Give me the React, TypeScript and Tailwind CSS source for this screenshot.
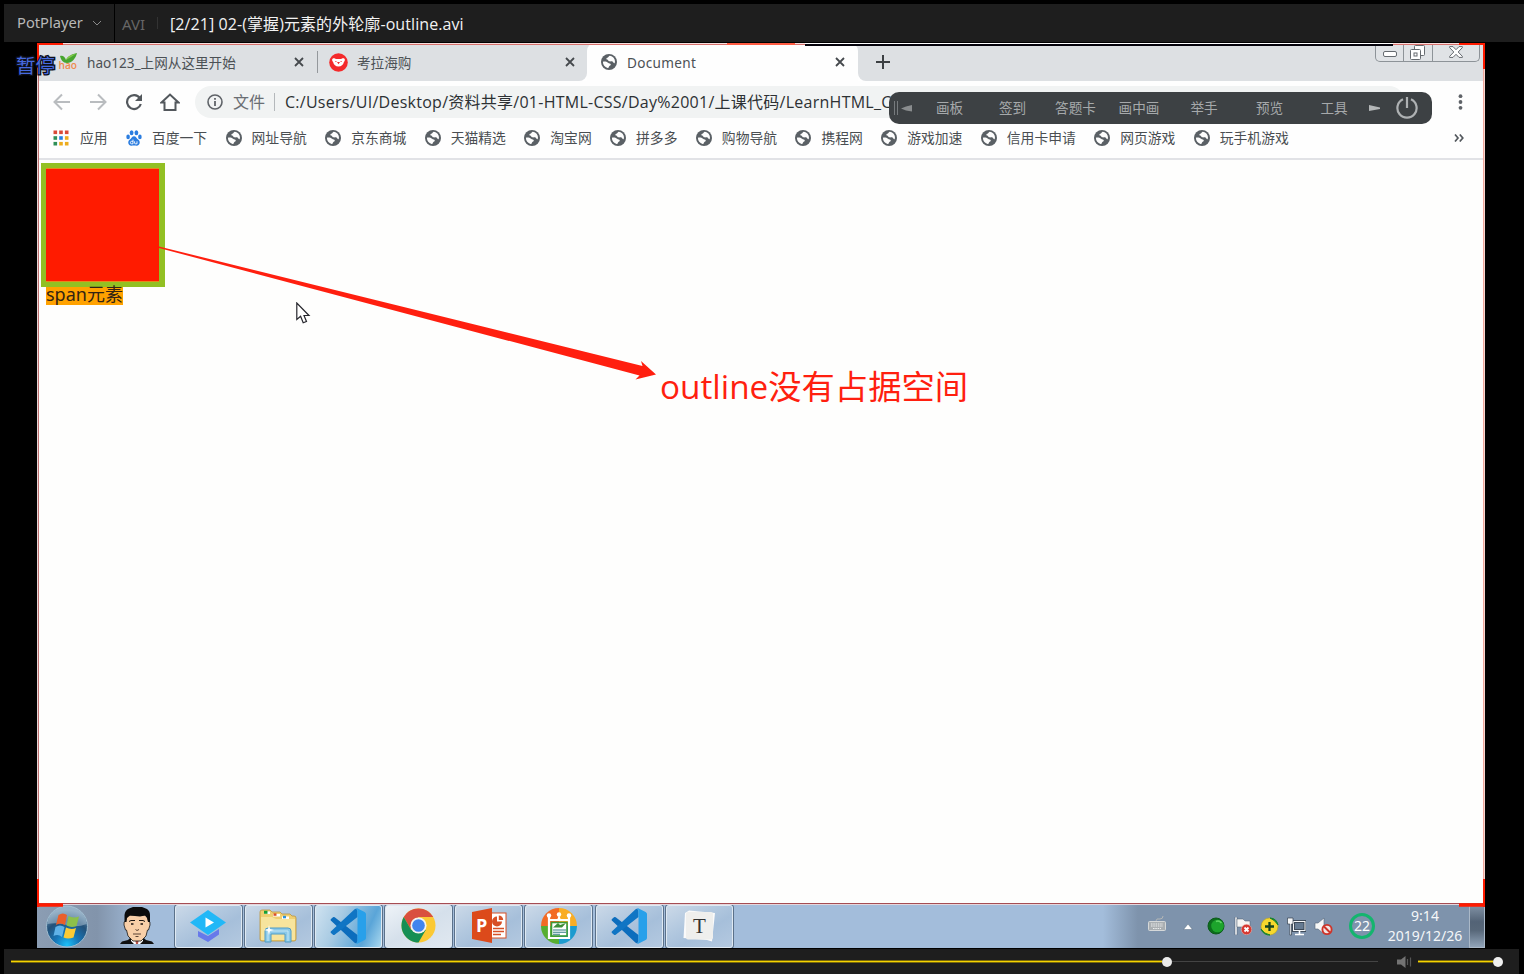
import React from "react";

const ui = "font-['Noto_Sans','Noto_Sans_CJK_SC',sans-serif]";
const uiLight = "font-['Open_Sans','Noto_Sans_CJK_SC',sans-serif]";

function Globe() {
  return (
    <svg className="h-4 w-4 shrink-0" viewBox="0 0 16 16">
      <circle cx="8" cy="8" r="8" fill="#5a6065" />
      <path d="M8.6 1.8 C10.4 1.8 12.6 3.2 13.6 5.4 C14.2 7.2 14 8.4 13.6 9.2 C12.8 9.4 12.4 8.4 11.8 7.8 C10.8 7 9.6 7.6 8.3 7.3 C6.9 7 7.4 5.6 6 5.5 C5 5.3 5.2 3.9 6.4 3.7 C7.8 3.4 7.4 2.2 8.6 1.8 Z" fill="#fdfdfd" />
      <path d="M1.9 7.8 C3.6 7.4 5.8 7.6 7 8.8 C8 9.7 9.6 9.4 9.8 10.5 C9.8 11.7 8.4 11.6 8 12.4 C7.8 13.2 7.6 13.9 6.6 13.9 C3.8 13.3 1.9 10.8 1.9 7.8 Z" fill="#fdfdfd" />
    </svg>
  );
}

function Close() {
  return (
    <svg className="h-[10px] w-[10px] shrink-0" viewBox="0 0 10 10">
      <path d="M1 1 L9 9 M9 1 L1 9" stroke="#45494d" strokeWidth="1.8" />
    </svg>
  );
}

function Hao() {
  return (
    <svg className="h-[18px] w-[20px] shrink-0 overflow-visible" viewBox="0 0 20 18">
      <path d="M2 3 C5 2 7 4 8 7 C10 3 14 1 19 0 C18 5 14 10 9 10 C5 10 3 7 2 3 Z" fill="#47a52f" />
      <path d="M8 7 C11 5 15 3 19 0 C15 2 10 2 8 7 Z" fill="#83c94b" />
      <text x="0.5" y="16.4" fontSize="11" fontWeight="600" fontFamily="Open Sans" fill="#ee8c4c" textLength="18.5" lengthAdjust="spacingAndGlyphs">hao</text>
    </svg>
  );
}

function Kaola() {
  return (
    <svg className="h-[19px] w-[19px] shrink-0" viewBox="0 0 19 19">
      <circle cx="9.5" cy="9.5" r="9.3" fill="#f42a2b" />
      <path d="M3.8 5.6 C5.3 4.8 6.2 6 7 5.9 H12 C12.8 6 13.7 4.8 15.2 5.6 C16.4 6.3 15.8 8.4 14.9 9 C14.2 12 12.4 13.4 9.5 13.4 C6.6 13.4 4.8 12 4.1 9 C3.2 8.4 2.6 6.3 3.8 5.6 Z" fill="#fff" />
      <path d="M8 9 H11 L9.5 11.2 Z M6.4 8 h1 v1 h-1 Z M11.6 8 h1 v1 h-1 Z" fill="#f42a2b" />
    </svg>
  );
}

function Apps() {
  const rows = [
    ["#d94a37", "#d94a37", "#d94a37"],
    ["#2f8f57", "#2680e3", "#edac1d"],
    ["#2f8f57", "#edac1d", "#edac1d"],
  ];
  return (
    <svg className="h-4 w-4 shrink-0" viewBox="0 0 16 16">
      {rows.map((r, y) => r.map((c, x) => <rect key={`${x}-${y}`} x={0.5 + x * 5.7} y={0.5 + y * 5.7} width="3.6" height="3.6" fill={c} />))}
    </svg>
  );
}

function Baidu() {
  return (
    <svg className="h-4 w-4 shrink-0" viewBox="0 0 16 16" fill="#2b7de0">
      <ellipse cx="5.6" cy="2.7" rx="1.9" ry="2.5" />
      <ellipse cx="10.4" cy="2.7" rx="1.9" ry="2.5" />
      <ellipse cx="2.1" cy="6.9" rx="1.8" ry="2.3" />
      <ellipse cx="13.9" cy="6.9" rx="1.8" ry="2.3" />
      <path d="M8 6.2 C10 6.2 10.5 8.4 12.4 9.8 C15 12 13.5 16 10.5 15.7 C9 15.5 7 15.5 5.5 15.7 C2.5 16 1 12 3.6 9.8 C5.5 8.4 6 6.2 8 6.2 Z" />
      <path d="M7 9.6 V13.8 H5.4 Q4.3 13.7 4.4 12.6 Q4.4 11.4 5.5 11.3 H7 M8.6 11.3 V13 Q8.6 13.8 9.4 13.8 H11 V11.3" fill="none" stroke="#fff" strokeWidth=".9" />
    </svg>
  );
}

function VSCode() {
  return (
    <svg className="h-9 w-9" viewBox="0 0 36 36">
      <path d="M.8 12.4 Q.2 11.6 1 10.9 L3 9.2 Q3.8 8.6 4.7 9.3 L27.5 27 V33 Q27.3 35 25.6 35.3 L24.6 34.8 Z" fill="#0c6dbd" />
      <path d="M.8 23.6 Q.2 24.4 1 25.1 L3 26.8 Q3.8 27.4 4.7 26.7 L27.5 9 V3 Q27.3 1 25.6 .7 L24.6 1.2 Z" fill="#1075c4" />
      <path d="M25.6 .3 Q26.4 0 27.2 .3 L34.6 3.9 Q36 4.6 36 6 V30 Q36 31.4 34.6 32.1 L27.2 35.7 Q26.4 36 25.6 35.7 Q27.5 35 27.5 33 V3 Q27.5 1 25.6 .3 Z" fill="#28a0ea" />
    </svg>
  );
}

function Xueyuan() {
  return (
    <svg className="h-[32px] w-[36px]" viewBox="0 0 36 32">
      <path d="M8 21 L18 26 L29 19 V24.5 L18 32 L8 26.5 Z" fill="#6779ea" />
      <path d="M18 0 L36 12.5 L18 25 L0 12.5 Z" fill="#22b8f7" />
      <path d="M15.5 7.5 L24 12.5 L15.5 17.5 Z" fill="#fff" />
    </svg>
  );
}

function Explorer() {
  return (
    <svg className="h-9 w-10" viewBox="0 0 40 36">
      <path d="M2 4 Q2 2 4 2 H12 L14 4 H22 L24 6 H32 L34 8 H36 Q38 8 38 10 V31 Q38 33 36 33 H4 Q2 33 2 31 Z" fill="#efcf72" stroke="#bd963d" strokeWidth=".8" />
      <path d="M6 3.5 H12 V6 H6 Z M15 6 H22 V8.5 H15 Z M24 8.5 H31 V11 H24 Z" fill="#fff" />
      <path d="M6 2.8 H9.5 V5.8 H6 Z" fill="#16a034" />
      <path d="M15.5 5.3 H18.5 V7.8 H15.5 Z" fill="#d94f2a" />
      <path d="M25 7.8 H28 V10.3 H25 Z" fill="#2e92d9" />
      <path d="M3 9 H14 L18 11 H37 V32 H3 Z" fill="#f7e49d" />
      <path d="M7 34 V23 Q7 20 10 20 H30 Q33 20 33 23 V34 H27 V26 H13 V34 Z" fill="#8bc9e8" stroke="#4f9cc6" strokeWidth="1" />
      <path d="M10 33 V23 H30 V33" fill="none" stroke="#c3e6f5" strokeWidth="1" />
      <path d="M11 17 L12 21 L16 22 L12 23 L11 27 L10 23 L6 22 L10 21 Z" fill="#fff" />
    </svg>
  );
}

function Chrome() {
  return (
    <svg className="h-[35px] w-[35px]" viewBox="0 0 36 36">
      <circle cx="18" cy="18" r="17.5" fill="#fbc934" />
      <path d="M2.8 9.3 A17.5 17.5 0 0 1 33.2 9.3 H18 L10.4 22.4 Z" fill="#d9503f" />
      <path d="M2.8 9.3 A17.5 17.5 0 0 0 18 35.5 L25.6 22.4 L18 24 L10.4 22.4 Z" fill="#168f55" />
      <circle cx="18" cy="18" r="8.3" fill="#f4f4f0" />
      <circle cx="18" cy="18" r="6.5" fill="#4285ee" />
    </svg>
  );
}

function PowerPoint() {
  return (
    <svg className="h-[35px] w-[36px]" viewBox="0 0 36 35">
      <rect x="18" y="5" width="17" height="25" fill="#fff" stroke="#d75027" strokeWidth="1" />
      <path d="M22 20.5 H33 M22 23.5 H33 M22 26.5 H30" stroke="#d75027" strokeWidth="1.5" />
      <path d="M26 8.5 A5 5 0 1 0 31 13.5 H26 Z" fill="#d75027" />
      <path d="M27.8 7.5 A4.4 4.4 0 0 1 32.2 11.9 H27.8 Z" fill="#d75027" />
      <path d="M1 4 L21 0 V35 L1 31 Z" fill="#dc4a1b" />
      <text x="5" y="24" fontSize="18" fontWeight="700" fontFamily="Open Sans" fill="#fff">P</text>
    </svg>
  );
}

function Capture() {
  return (
    <svg className="h-[38px] w-[38px]" viewBox="0 0 38 38">
      <path d="M19 19 V1 A18 18 0 0 0 1 19 Z" fill="#f26b25" />
      <path d="M19 19 V1 A18 18 0 0 1 37 19 Z" fill="#f9ad25" />
      <path d="M19 19 H1 A18 18 0 0 0 19 37 Z" fill="#57ae31" />
      <path d="M19 19 H37 A18 18 0 0 1 19 37 Z" fill="#1c9bcf" />
      <path d="M9 9 V31 H29 V9 M9 13 H29" fill="none" stroke="#fff" strokeWidth="2.2" />
      <circle cx="9" cy="8.5" r="2.2" fill="#fff" /><circle cx="19" cy="7.5" r="2.2" fill="#fff" /><circle cx="29" cy="8.5" r="2.2" fill="#fff" />
      <path d="M17 13 L19 8 L21 13 Z" fill="#fff" />
      <rect x="11.5" y="15.5" width="15.5" height="13.5" fill="#fff" stroke="#3d9a36" strokeWidth="1.6" />
      <path d="M13 23 H26 M13 25.2 H26 M13 27.3 H20" stroke="#357e86" strokeWidth="1.1" />
      <path d="M13 20.5 L18 16 L20 18 L26 16 L22 20.5 Z" fill="#3d8e37" />
    </svg>
  );
}

function Typora() {
  return (
    <svg className="h-[32px] w-[33px]" viewBox="0 0 33 32">
      <path d="M2 3 L6 .5 L32 3 L29 31.5 L24 30 L.5 28 Z" fill="#fafafa" />
      <rect x="3" y="2" width="27" height="27.5" rx="2" fill="#efefed" />
      <text x="10" y="23" fontSize="21" fontFamily="Liberation Serif" fill="#333">T</text>
    </svg>
  );
}

function StartOrb() {
  return (
    <svg className="h-[43px] w-[44px] shrink-0" viewBox="0 0 44 43">
      <defs>
        <radialGradient id="orb" cx=".5" cy=".95" r=".85">
          <stop offset="0" stopColor="#1cc0f8" />
          <stop offset=".35" stopColor="#1676b8" />
          <stop offset=".7" stopColor="#235179" />
          <stop offset="1" stopColor="#6d90ad" />
        </radialGradient>
      </defs>
      <circle cx="22" cy="21.5" r="20.5" fill="url(#orb)" stroke="#9fbccf" />
      <path d="M2.4 19 A19.7 19.7 0 0 1 41.6 19 Q32 23 22 20 Q12 17 2.4 19 Z" fill="#d8e7f0" opacity=".4" />
      <path d="M13.5 10 Q18 7 22 10 L20 20 Q15 17 11 20 Z" fill="#ea5f2a" />
      <path d="M23.5 11 Q28 13.5 34 11.5 L31.5 21 Q26 23 21.5 20.5 Z" fill="#8cc04a" />
      <path d="M10.5 22 Q15 19 19.5 22 L17 32 Q13 28.5 8.5 31 Z" fill="#5fb2e8" />
      <path d="M21 22.5 Q26 25 31 23 L28.5 32.5 Q23 34.5 18.5 32.5 Z" fill="#fbcb36" />
    </svg>
  );
}

function Face() {
  return (
    <svg className="h-[37px] w-[34px] shrink-0" viewBox="0 0 34 37">
      <path d="M0 37 L2 34.5 L8 33 L11 30 H23 L26 33 L32 34.5 L34 37 Z" fill="#101010" />
      <path d="M11 31 L17 35 L23 31 V34 L20 37 H14 L11 34 Z" fill="#fff" />
      <path d="M15.5 34 H18.5 L18 37 H16 Z" fill="#b5544a" />
      <path d="M6 11 L8 8 H26 L28 11 L28.5 14 Q30.5 14 30 18 L28.5 23 H27.5 L26 29 L21 34 H13 L8 29 L6.5 23 H5.5 L4 18 Q3.5 14 5.5 14 Z" fill="#f8cfa8" stroke="#151515" strokeWidth=".8" />
      <path d="M4.5 15 V8 Q5 3 9 1.5 L13 0 H22 L27 2 Q30 4 30 8 V15 H28 L27 11 L25 8.5 L20 9.5 L10 8.5 L7 11 L6.5 15 Z" fill="#0c0c0c" />
      <path d="M9 14.5 L11 13.5 H15 M19 13.5 H23 L25 14.5" stroke="#1b1512" strokeWidth="1" fill="none" />
      <path d="M11 17 H13.5 M20.5 17 H23" stroke="#1b1512" strokeWidth="1.5" />
      <path d="M15.5 22.5 L17 23.5 L19 22.5 M13 27 H21 M15.5 29.5 H18.5" stroke="#4a3428" strokeWidth=".9" fill="none" />
    </svg>
  );
}

function TaskButton({ children, look = "normal" }: { children: React.ReactNode; look?: "normal" | "active" | "light" }) {
  const bg =
    look === "active"
      ? "bg-[linear-gradient(115deg,#cfe2f0_0%,#a9cbe3_35%,#5aa5d8_75%,#a9d8ef_100%)]"
      : look === "light"
        ? "bg-[linear-gradient(150deg,#eef3f8_0%,#d5e0eb_50%,#e0e8f0_100%)]"
        : "bg-[linear-gradient(150deg,#cbd9e8_0%,#b2c8df_38%,#a6bfda_60%,#b4c9e0_100%)]";
  return (
    <div className={`flex h-[43px] w-[67px] shrink-0 items-center justify-center rounded-[3px] border border-[#dfe9f2] pb-px shadow-[0_0_0_1px_#5b718a] ${bg}`}>
      {children}
    </div>
  );
}

const bookmarks = ["网址导航", "京东商城", "天猫精选", "淘宝网", "拼多多", "购物导航", "携程网", "游戏加速", "信用卡申请", "网页游戏", "玩手机游戏"];

function TitleBar() {
  return (
    <header className="ml-1 flex h-[38px] shrink-0 items-center bg-[#1e1e1e]">
      <div className="flex h-full w-[111px] items-center border-r border-black pl-[13px]">
        <span className="mb-[2px] w-[67px] whitespace-nowrap text-[14.7px] leading-5 text-[#b8b8b8]">PotPlayer</span>
        <svg className="ml-[9px] h-2 w-2" viewBox="0 0 8 8"><path d="M0 2 L4 6 L8 2" fill="none" stroke="#8a8a8a" /></svg>
      </div>
      <span className="ml-[7px] mt-[2px] w-[35px] text-[15px] leading-5 text-[#666]">AVI</span>
      <span className="h-3 w-px bg-[#333]" />
      <span className={`ml-[12px] mt-[2px] whitespace-nowrap text-[16px] leading-5 tracking-[0.08px] text-[#f2f2f2] ${uiLight}`}>[2/21] 02-(掌握)元素的外轮廓-outline.avi</span>
    </header>
  );
}

function WindowButtons() {
  return (
    <div className="mt-[2px] flex h-[17px] w-[105px] rounded-b-[5px] border border-t-0 border-[#8d9398] bg-[#e0e3e6]">
      <div className="flex w-[28px] items-center justify-center border-r border-[#8d9398]">
        <svg className="mt-[2px] h-[6px] w-[14px]" viewBox="0 0 14 6"><rect x=".5" y=".5" width="13" height="5" rx="1.5" fill="#fff" stroke="#666b70" /></svg>
      </div>
      <div className="flex w-[29px] items-start justify-center border-r border-[#8d9398] pr-[2px]">
        <svg className="h-[15px] w-[15px] shrink-0" viewBox="0 0 15 15" fill="#fff" stroke="#666b70"><rect x="4.5" y=".5" width="10" height="10" rx="1" /><rect x=".5" y="4.5" width="10" height="10" rx="1" /><rect x="4" y="8" width="3" height="3" /></svg>
      </div>
      <div className="flex flex-1 items-start justify-center pt-px">
        <svg className="h-[12px] w-[14px]" viewBox="0 0 14 12"><path d="M.6 .6 H4 L7 3.7 L10 .6 H13.4 V1.6 L9.2 6 L13.4 10.4 V11.4 H10 L7 8.3 L4 11.4 H.6 V10.4 L4.8 6 L.6 1.6 Z" fill="#fff" stroke="#666b70" /></svg>
      </div>
    </div>
  );
}

function Tabs() {
  return (
    <div className="flex h-[38px] shrink-0 bg-white text-[13.6px] text-[#4c5155]">
      <div className="flex w-[550px] items-center rounded-br-[8px] bg-[#dde0e3] pl-[21px]">
        <Hao />
        <span className="ml-[9px] mt-[2px] w-[207px] whitespace-nowrap leading-5">hao123_上网从这里开始</span>
        <Close />
        <span className="ml-[13px] h-[22px] w-px bg-[#94989c]" />
        <span className="ml-[11px] flex"><Kaola /></span>
        <span className="ml-[9px] mt-[2px] w-[208px] leading-5">考拉海购</span>
        <Close />
      </div>
      <div className="flex w-[271px] items-center bg-[#dde0e3]">
        <div className="flex h-full w-full items-center rounded-t-[8px] bg-[#fefefe] pl-[14px]">
          <Globe />
          <span className="ml-[10px] mt-[2px] w-[208px] leading-5 tracking-[0.3px]">Document</span>
          <Close />
        </div>
      </div>
      <div className="flex flex-1 items-start justify-between rounded-bl-[8px] bg-[#dde0e3] pr-[5px]">
        <svg className="ml-[18px] mt-[12px] h-[14px] w-[14px]" viewBox="0 0 14 14"><path d="M7 0 V14 M0 7 H14" stroke="#3c4043" strokeWidth="2" /></svg>
        <WindowButtons />
      </div>
    </div>
  );
}

function Toolbar() {
  return (
    <div className="flex h-[41px] shrink-0 items-center pl-[16px] pr-[14px]">
      <svg className="h-[18px] w-[18px]" viewBox="0 0 18 18" fill="none" stroke="#b9bcbf" strokeWidth="2"><path d="M17 9 H2 M9 1.5 L1.5 9 L9 16.5" /></svg>
      <svg className="ml-[18px] h-[18px] w-[18px]" viewBox="0 0 18 18" fill="none" stroke="#b9bcbf" strokeWidth="2"><path d="M1 9 H16 M9 1.5 L16.5 9 L9 16.5" /></svg>
      <svg className="ml-[18px] h-[18px] w-[18px]" viewBox="0 0 18 18"><path d="M14.8 5 A7 7 0 1 0 15.8 11" fill="none" stroke="#53585d" strokeWidth="2.2" /><path d="M17 1 V8 H10 Z" fill="#53585d" /></svg>
      <svg className="ml-[17px] h-[18px] w-[20px]" viewBox="0 0 20 18"><path d="M1.5 9.5 L10 1.5 L18.5 9.5 H15.5 V17 H4.5 V9.5 Z" fill="none" stroke="#53585d" strokeWidth="2" /></svg>
      <div className="ml-[15px] flex h-[32px] w-[1210px] items-center overflow-hidden rounded-full bg-[#f1f3f3] pl-[12px] text-[16px]">
        <svg className="h-4 w-4 shrink-0" viewBox="0 0 16 16"><circle cx="8" cy="8" r="7" fill="none" stroke="#5f6368" strokeWidth="1.6" /><path d="M7.1 7 H8.9 V12 H7.1 Z M7.1 4 H8.9 V5.8 H7.1 Z" fill="#5f6368" /></svg>
        <span className="ml-[10px] w-[41px] shrink-0 leading-6 text-[#6a6e73]">文件</span>
        <span className="h-[18px] w-px shrink-0 bg-[#b4b8bb]" />
        <span className={`ml-[10px] whitespace-nowrap leading-6 tracking-[0.26px] text-[#2d3134] ${uiLight}`}>C:/Users/UI/Desktop/资料共享/01-HTML-CSS/Day%2001/上课代码/LearnHTML_C</span>
      </div>
      <svg className="ml-auto mr-[8px] h-4 w-[5px]" viewBox="0 0 5 16" fill="#5f6368"><circle cx="2.5" cy="2.2" r="1.9" /><circle cx="2.5" cy="8" r="1.9" /><circle cx="2.5" cy="13.8" r="1.9" /></svg>
    </div>
  );
}

function Bookmarks() {
  return (
    <div className="flex h-[38px] shrink-0 items-center gap-[18.4px] border-b-2 border-[#e1e2e6] pb-[4px] pl-[16px] text-[13.8px] text-[#4a4e52]">
      <div className="flex items-center gap-[11px]"><Apps /><span className="leading-5">应用</span></div>
      <div className="flex items-center gap-[10px]"><Baidu /><span className="leading-5">百度一下</span></div>
      {bookmarks.map((b) => (
        <div key={b} className="flex shrink-0 items-center gap-[10px]"><Globe /><span className="whitespace-nowrap leading-5">{b}</span></div>
      ))}
      <svg className="ml-auto mr-[21px] h-2 w-[10px]" viewBox="0 0 10 8"><path d="M1 .5 L4 4 L1 7.5 M5.8 .5 L8.8 4 L5.8 7.5" fill="none" stroke="#53585d" strokeWidth="1.7" /></svg>
    </div>
  );
}

function Page() {
  return (
    <main className="flex-1 bg-[#fefefd] pl-[3.5px] pt-[3px]">
      <div className="flex h-[124px] w-[124px] items-center justify-center bg-[#92c023]">
        <div className="h-[114px] w-[113px] border-y border-[#e58a1c] bg-[#ff1b00]" />
      </div>
      <div className="ml-[5.5px] flex h-[18px] w-[77px] items-center bg-[#ffa200]">
        <span className="mb-[4px] whitespace-nowrap text-[18px] leading-[18px] text-[#322413]">span元素</span>
      </div>
    </main>
  );
}

function Tray() {
  return (
    <div className="ml-auto flex h-full w-[390px] items-center bg-[linear-gradient(90deg,#a3bddb_0%,#a3bddb_2%,#7e93ac_11%,#7e93ac_100%)] pl-[53px]">
      <svg className="mb-[4px] h-4 w-[18px] shrink-0" viewBox="0 0 18 16"><path d="M8 5 Q8 2 12 3 Q15 3 15 0" fill="none" stroke="#b3b6b6" /><rect x=".5" y="5.5" width="17" height="9" rx="1" fill="#aaafb2" stroke="#d5d8d9" /><path d="M3 8 H15 M3 10 H15 M5 12.5 H13" stroke="#eceeee" strokeWidth="1" strokeDasharray="1.5 .8" /></svg>
      <svg className="ml-[17px] mt-[1px] h-[6px] w-[10px] shrink-0" viewBox="0 0 10 6"><path d="M5 0 L9.5 5.5 H.5 Z" fill="#fff" stroke="#5b6e83" strokeWidth=".5" /></svg>
      <svg className="ml-[14px] h-[18px] w-[18px] shrink-0" viewBox="0 0 18 18"><circle cx="9" cy="9" r="8" fill="#0c6f1c" stroke="#0b5b1a" /><circle cx="10.5" cy="9" r="6.3" fill="#1da42c" /><path d="M9 4.5 Q12 3 14.5 6" fill="none" stroke="#5fd563" strokeWidth="1.5" /></svg>
      <svg className="ml-[9px] h-[18px] w-[18px] shrink-0" viewBox="0 0 18 18"><path d="M1 0 H3 V18 H1 Z" fill="#fff" stroke="#46566a" strokeWidth=".5" /><path d="M3 2 H9 L11 4 H16 V12 H10 L8 10 H3 Z" fill="#f5f5f3" stroke="#4b596b" strokeWidth=".5" /><circle cx="12.5" cy="12.5" r="5.2" fill="#d63830" stroke="#efc4bd" strokeWidth=".5" /><path d="M10.5 10.5 L14.5 14.5 M14.5 10.5 L10.5 14.5" stroke="#fff" strokeWidth="1.8" /></svg>
      <svg className="ml-[8px] h-[19px] w-[19px] shrink-0" viewBox="0 0 19 19"><circle cx="9.5" cy="9.5" r="8.5" fill="#f6d82d" stroke="#b3a022" strokeWidth=".6" /><path d="M10 1 A8.7 8.7 0 0 1 18 8 Q15 3 10 1 M1 12 A8.7 8.7 0 0 0 10 18 Q4 17 1 12" fill="#188433" stroke="#188433" /><path d="M9.5 5 V14 M5 9.5 H14" stroke="#17451f" strokeWidth="2.3" /></svg>
      <svg className="ml-[8px] h-[19px] w-[19px] shrink-0" viewBox="0 0 19 19"><rect x="6.5" y="4.5" width="11.5" height="9" fill="#667b92" stroke="#303c4a" strokeWidth="2.8" /><rect x="6.5" y="4.5" width="11.5" height="9" fill="none" stroke="#f4f6f8" strokeWidth="1.1" /><path d="M12.5 14 V17 M8 17.5 H17" stroke="#fff" strokeWidth="1.6" /><path d="M.5 1 H6 V7 H4.5 V18 H2.8 V7 H.5 Z" fill="#f6f7f8" stroke="#34414f" strokeWidth=".7" /></svg>
      <svg className="ml-[8px] h-[19px] w-[19px] shrink-0" viewBox="0 0 19 19"><path d="M1 6 H4 L10 1 V17 L4 12 H1 Z" fill="#f6f7f7" stroke="#56657a" strokeWidth=".6" /><circle cx="13" cy="12.5" r="4.6" fill="#f4e6e3" stroke="#cf3429" strokeWidth="1.9" /><path d="M10 9.5 L16 15.5" stroke="#cf3429" strokeWidth="1.9" /></svg>
      <div className="mb-[1px] ml-[16px] flex h-[26px] w-[26px] shrink-0 items-center justify-center rounded-full border-[3px] border-[#14b56e] text-[14px] leading-none text-white">22</div>
      <div className="ml-[12px] w-[76px] shrink-0 text-center text-[14px] leading-[20.5px] text-[#f5f7f9]">
        <div>9:14</div><div className="whitespace-nowrap">2019/12/26</div>
      </div>
      <div className="ml-auto h-full w-[16px] shrink-0 border border-[#aab8c7] bg-[linear-gradient(180deg,#8293a6,#536376_40%,#576779_60%,#91a4b9)]" />
    </div>
  );
}

function Taskbar() {
  return (
    <div className="flex h-[44px] shrink-0 items-center bg-[linear-gradient(90deg,#8b9db3_0px,#8294ab_60px,#a3bddb_105px,#a3bddb_100%)]">
      <span className="ml-[8px] flex"><StartOrb /></span>
      <span className="ml-[31px] mr-[20.5px] flex pb-[2px]"><Face /></span>
      <div className="flex gap-[3.2px]">
        <TaskButton><Xueyuan /></TaskButton>
        <TaskButton><Explorer /></TaskButton>
        <TaskButton look="active"><VSCode /></TaskButton>
        <TaskButton look="light"><Chrome /></TaskButton>
        <TaskButton><PowerPoint /></TaskButton>
        <TaskButton><Capture /></TaskButton>
        <TaskButton><VSCode /></TaskButton>
        <TaskButton><Typora /></TaskButton>
      </div>
      <Tray />
    </div>
  );
}

function Player() {
  return (
    <footer className="ml-1 mr-[5px] mt-px flex h-[25px] shrink-0 items-center bg-[#1e1e1e] pl-[7px]">
      <span className="h-[3px] w-[1151px] border-y border-[#78690b] bg-[#f6d300]" />
      <span className="h-[10px] w-[10px] rounded-full bg-[#ebebeb]" />
      <span className="h-px w-[206px] bg-[#444]" />
      <svg className="ml-[19px] h-3 w-[15px]" viewBox="0 0 15 12"><path d="M0 3.5 H4 L8.5 0 V12 L4 8.5 H0 Z" fill="#737373" /><path d="M10.5 3 V9 M13.5 1.5 V10.5" stroke="#565656" strokeWidth="1.2" /></svg>
      <span className="ml-[6px] h-[3px] w-[75px] border-y border-[#78690b] bg-[#f6d300]" />
      <span className="h-[10px] w-[10px] rounded-full bg-[#f0f0f0]" />
    </footer>
  );
}

function FloatingBar() {
  return (
    <div className="absolute left-[889px] top-[92px] flex h-[32px] w-[543px] items-center rounded-[10px] bg-[#3d4144] text-[13.6px] text-[#a6a9ab]">
      <span className="ml-[5px] h-[14px] w-[4px] shrink-0 border-x border-[#777b7e]" />
      <svg className="ml-[3px] mr-[6px] h-[7px] w-[11px] shrink-0" viewBox="0 0 11 7"><path d="M0 3.5 L5 1.5 L11 0 V6.5 L5 5.5 Z" fill="#898c8e" /></svg>
      <div className="grid w-[448px] shrink-0 grid-cols-[63px_63px_63px_64px_66px_65px_64px]">
        {["画板", "签到", "答题卡", "画中画", "举手", "预览", "工具"].map((t) => <span key={t} className="text-center leading-5">{t}</span>)}
      </div>
      <svg className="ml-[3px] h-[6px] w-[11px] shrink-0" viewBox="0 0 11 6"><path d="M0 0 L11 2.5 V4 L0 6 Z" fill="#b4b7b8" /></svg>
      <svg className="ml-auto mr-[14px] h-[22px] w-[22px]" viewBox="0 0 22 22" fill="none" stroke="#aeb1b3" strokeWidth="2.2"><path d="M7 2.3 A9.6 9.6 0 1 0 15 2.3 M11 0 V11" /></svg>
    </div>
  );
}

function CaptureFrame() {
  return (
    <svg className="pointer-events-none absolute left-[37px] top-[43px] h-[864px] w-[1448px]" viewBox="0 0 1448 864">
      <path d="M0 .5 H1448" stroke="#f8dfdd" />
      <path d="M0 1.5 H1448" stroke="#d7716d" />
      <path d="M.5 0 V862" stroke="#e6d5d5" />
      <path d="M1.5 0 V862" stroke="#c07070" />
      <path d="M1446.5 0 V862" stroke="#f0a69b" />
      <path d="M1447.5 0 V862" stroke="#f6d6d0" />
      <path d="M0 860.5 H1448" stroke="#a54d53" />
      <path d="M0 861.5 H1448" stroke="#e5d5dc" />
      <rect x="768" y="0" width="588" height="1" fill="#fff" />
      <rect x="768" y="1" width="588" height="2" fill="#05030c" />
      <path d="M690 1 H758" stroke="#ff5c43" strokeWidth="2" />
      <path d="M0 1 H26 M1 0 V25 M1422 1 H1448 M1447 0 V26 M1 836 V864 M1447 836 V864" stroke="#ff1b00" strokeWidth="2" />
      <path d="M0 862 H26 M1422 862 H1448" stroke="#ff1b00" strokeWidth="3.5" />
    </svg>
  );
}

export default function App() {
  return (
    <div className={`relative flex h-[974px] w-[1524px] flex-col overflow-hidden bg-black pt-1 ${ui}`}>
      <TitleBar />
      <section className="ml-[37px] mt-px flex h-[905px] w-[1448px] shrink-0 flex-col overflow-hidden bg-[#fefefe]">
        <Tabs />
        <Toolbar />
        <Bookmarks />
        <Page />
        <Taskbar />
      </section>
      <Player />
      <CaptureFrame />
      <FloatingBar />
      <span className="absolute left-[16px] top-[54px] whitespace-nowrap text-[19.5px] leading-6 text-[#4669df] [-webkit-text-stroke:2.5px_#0d0f18] [paint-order:stroke_fill]">暂停</span>
      <svg className="absolute left-[155px] top-[240px] h-[145px] w-[505px]" viewBox="155 240 505 145">
        <path d="M159 246.5 L642.5 366 L641 361 L656 374.5 L635.5 379.5 L639.5 375.5 L159 248 Z" fill="#ff1f0f" />
      </svg>
      <span className={`absolute left-[660px] top-[362px] whitespace-nowrap text-[33.3px] leading-[48px] text-[#ff1f0f] ${uiLight}`}>outline没有占据空间</span>
      <svg className="absolute left-[296px] top-[302px] h-[23px] w-[15px]" viewBox="0 0 15 23">
        <path d="M.8 1 V17.5 L4.6 14.2 L7.2 20.8 L10.5 19.5 L8 13.5 H13 Z" fill="#fff" stroke="#26262c" strokeWidth="1.2" />
      </svg>
    </div>
  );
}
